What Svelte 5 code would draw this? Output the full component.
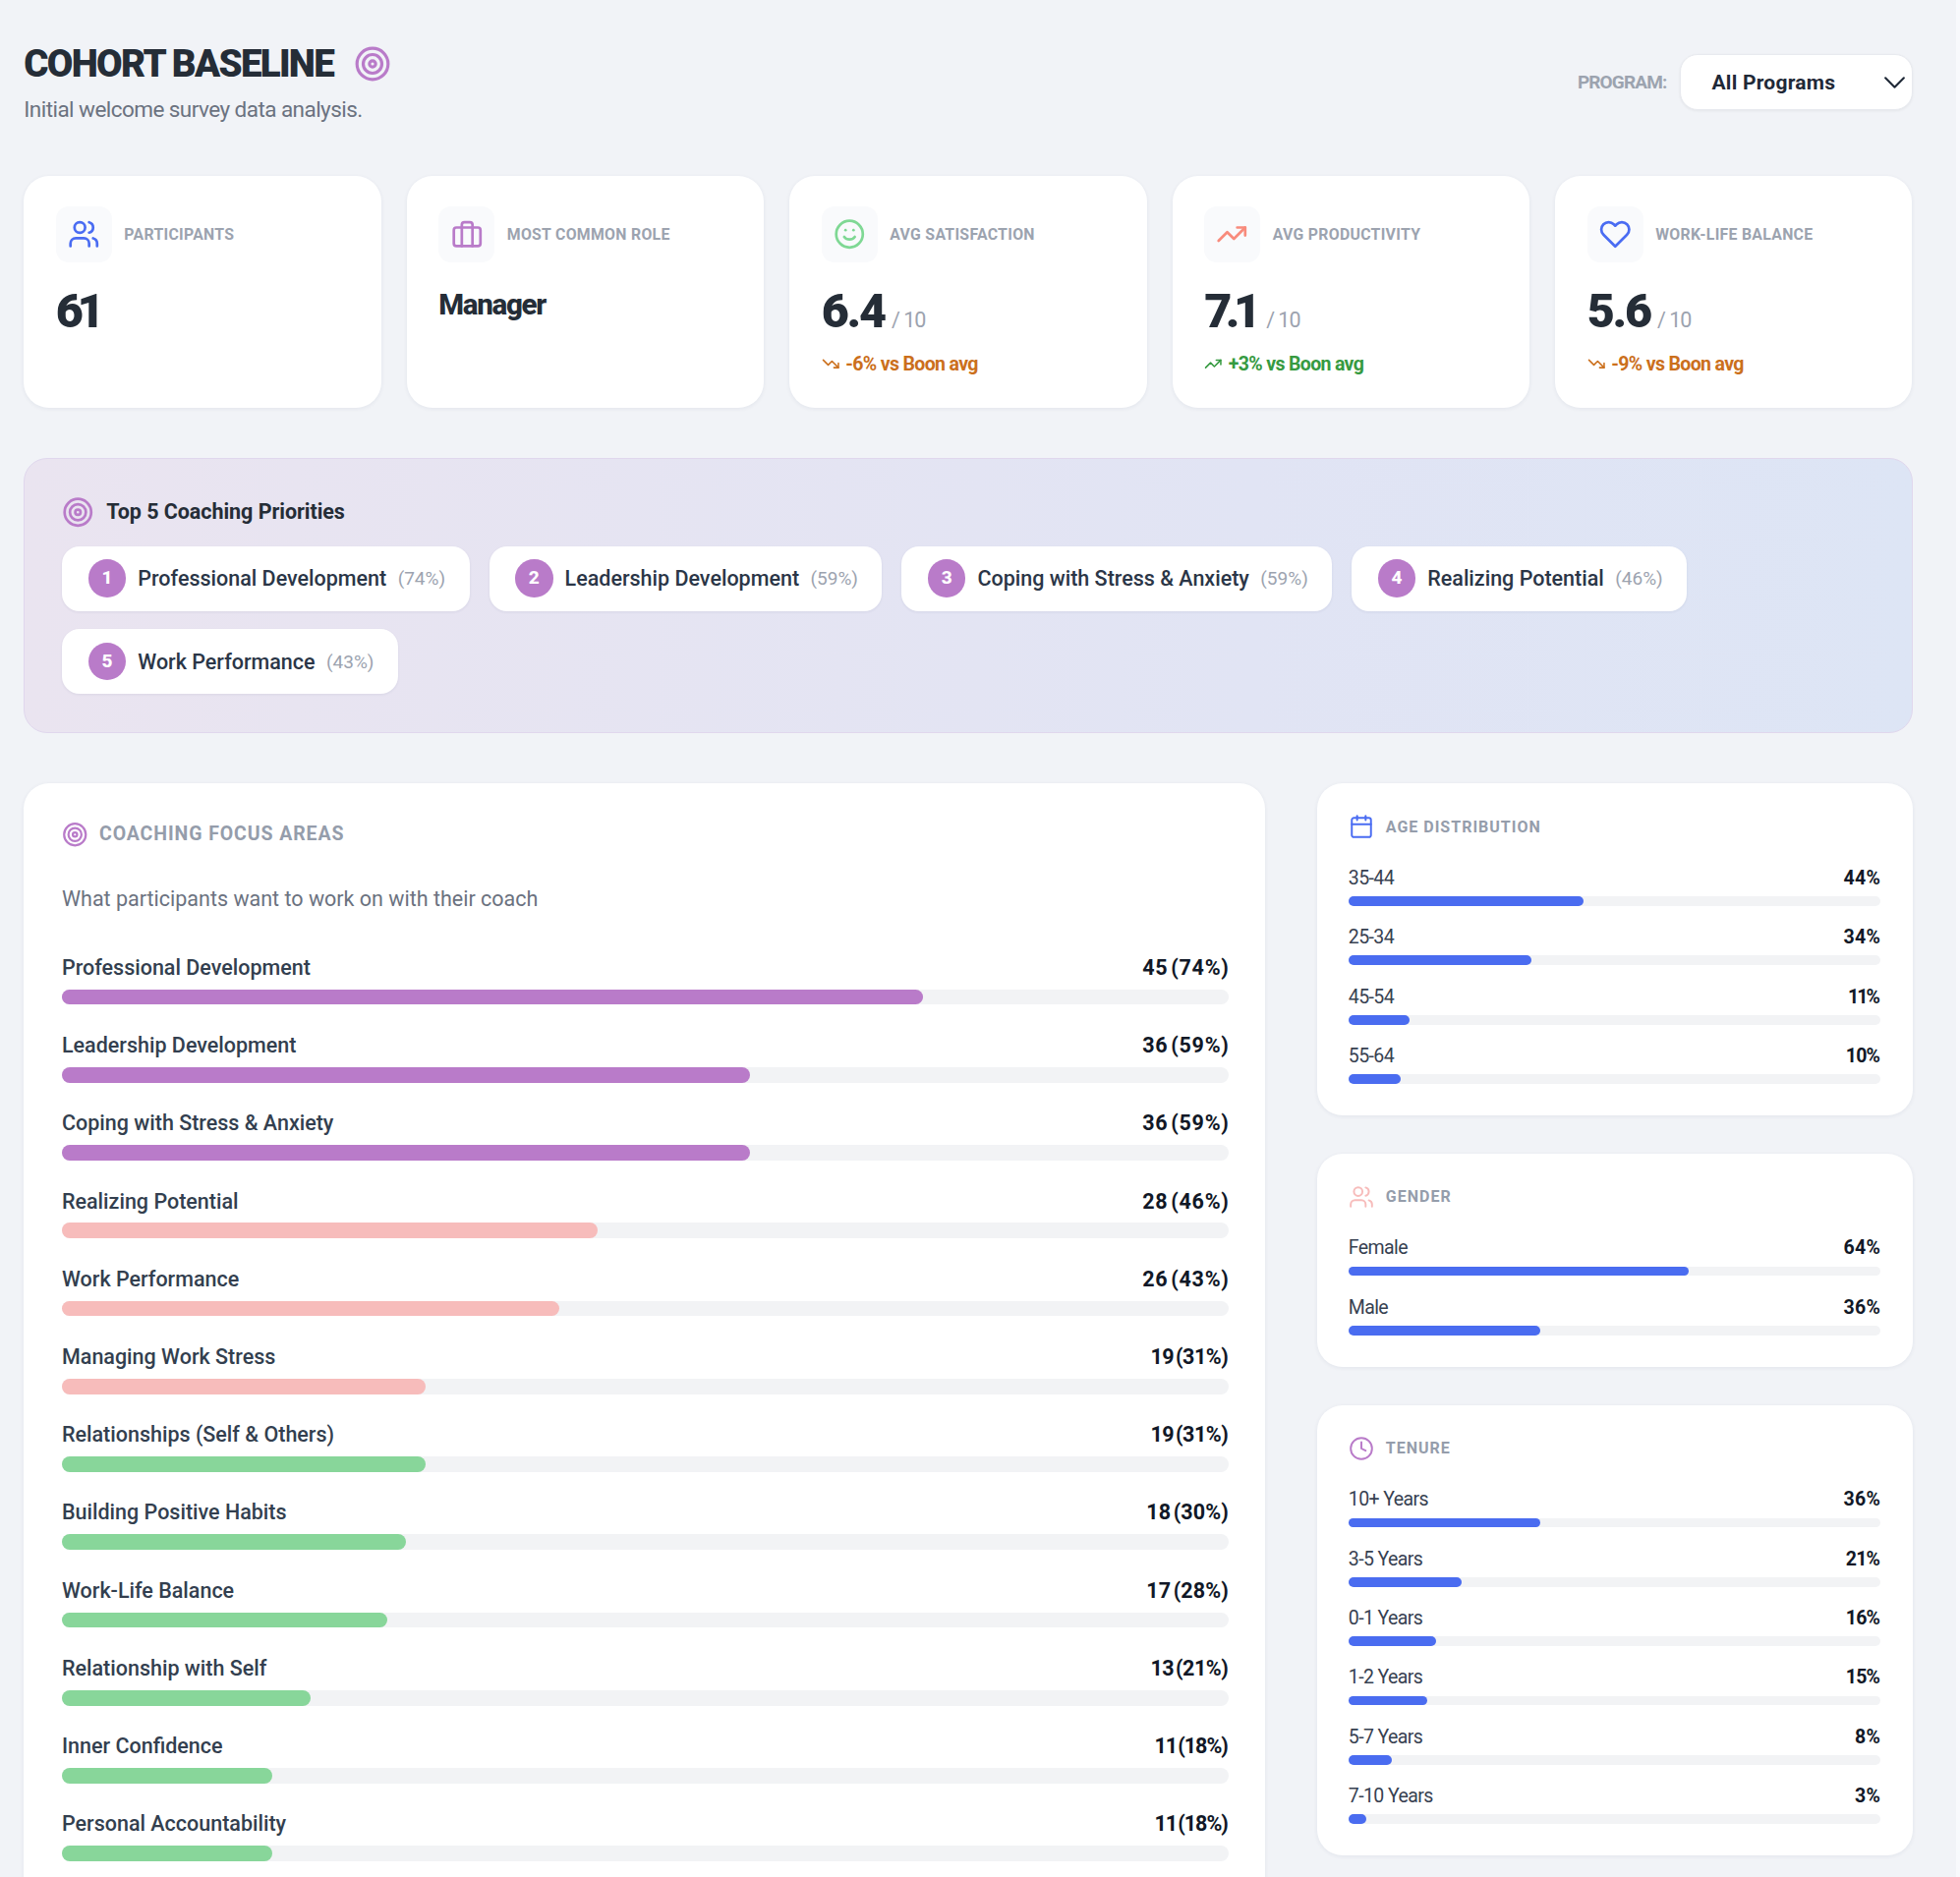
<script>
  const TOTAL = 61;

  const icons = {
    target: [
      'M2 12a10 10 0 1 0 20 0a10 10 0 1 0-20 0',
      'M6 12a6 6 0 1 0 12 0a6 6 0 1 0-12 0',
      'M10 12a2 2 0 1 0 4 0a2 2 0 1 0-4 0'
    ],
    users: [
      'M16 21v-2a4 4 0 0 0-4-4H6a4 4 0 0 0-4 4v2',
      'M5 7a4 4 0 1 0 8 0a4 4 0 1 0-8 0',
      'M22 21v-2a4 4 0 0 0-3-3.87',
      'M16 3.13a4 4 0 0 1 0 7.75'
    ],
    briefcase: [
      'M4 7h16a2 2 0 0 1 2 2v10a2 2 0 0 1-2 2H4a2 2 0 0 1-2-2V9a2 2 0 0 1 2-2z',
      'M16 21V5a2 2 0 0 0-2-2h-4a2 2 0 0 0-2 2v16'
    ],
    smile: [
      'M2 12a10 10 0 1 0 20 0a10 10 0 1 0-20 0',
      'M8 14s1.5 2 4 2 4-2 4-2',
      'M9 9h.01',
      'M15 9h.01'
    ],
    up: ['M22 7l-8.5 8.5-5-5L2 17', 'M16 7h6v6'],
    down: ['M22 17l-8.5-8.5-5 5L2 7', 'M16 17h6v-6'],
    heart: [
      'M20.84 4.61a5.5 5.5 0 0 0-7.78 0L12 5.67l-1.06-1.06a5.5 5.5 0 0 0-7.78 7.78l1.06 1.06L12 21.23l7.78-7.78 1.06-1.06a5.5 5.5 0 0 0 0-7.78z'
    ],
    calendar: [
      'M5 4h14a2 2 0 0 1 2 2v14a2 2 0 0 1-2 2H5a2 2 0 0 1-2-2V6a2 2 0 0 1 2-2z',
      'M16 2v4',
      'M8 2v4',
      'M3 10h18'
    ],
    clock: ['M2 12a10 10 0 1 0 20 0a10 10 0 1 0-20 0', 'M12 6v6l4 2'],
    chevron: ['M3 8l9 9L21 8']
  };

  const stats = [
    { label: 'Participants', icon: 'users', color: 'blue', value: '61' },
    { label: 'Most Common Role', icon: 'briefcase', color: 'purple', value: 'Manager', text: true },
    { label: 'Avg Satisfaction', icon: 'smile', color: 'green', value: '6.4', trend: 'down', diff: '-6%' },
    { label: 'Avg Productivity', icon: 'up', color: 'coral', value: '7.1', trend: 'up', diff: '+3%' },
    { label: 'Work-Life Balance', icon: 'heart', color: 'blue', value: '5.6', trend: 'down', diff: '-9%' }
  ];

  const focusAreas = [
    { name: 'Professional Development', count: 45 },
    { name: 'Leadership Development', count: 36 },
    { name: 'Coping with Stress & Anxiety', count: 36 },
    { name: 'Realizing Potential', count: 28 },
    { name: 'Work Performance', count: 26 },
    { name: 'Managing Work Stress', count: 19 },
    { name: 'Relationships (Self & Others)', count: 19 },
    { name: 'Building Positive Habits', count: 18 },
    { name: 'Work-Life Balance', count: 17 },
    { name: 'Relationship with Self', count: 13 },
    { name: 'Inner Confidence', count: 11 },
    { name: 'Personal Accountability', count: 11 }
  ];

  const breakdowns = [
    {
      title: 'Age Distribution',
      icon: 'calendar',
      color: 'blue',
      rows: [['35-44', 27], ['25-34', 21], ['45-54', 7], ['55-64', 6]]
    },
    {
      title: 'Gender',
      icon: 'users',
      color: 'pink',
      rows: [['Female', 39], ['Male', 22]]
    },
    {
      title: 'Tenure',
      icon: 'clock',
      color: 'purple',
      rows: [['10+ Years', 22], ['3-5 Years', 13], ['0-1 Years', 10], ['1-2 Years', 9], ['5-7 Years', 5], ['7-10 Years', 2]]
    }
  ];

  const share = count => (count / TOTAL) * 100;

  const percent = count => `${Math.round(share(count))}%`;

  const barColor = index => (index < 3 ? 'purple' : index < 6 ? 'pink' : 'green');

  // Roboto's 1 is as wide as any other digit, so tighten strings that contain it
  const tracking = (text, base, step) => base - step * (text.split('1').length - 1);
</script>

{#snippet icon(name, size, color = '', stroke = 2)}
  <svg class="icon {color}" width={size} height={size} viewBox="0 0 24 24" stroke-width={stroke}>
    {#each icons[name] as d}
      <path {d} />
    {/each}
  </svg>
{/snippet}

{#snippet figure(text, base, step)}
  {@const space = tracking(text, base, step)}
  <strong style="letter-spacing: {space}px; margin-right: {-space}px">{text}</strong>
{/snippet}

<div class="page">
  <header>
    <div>
      <h1>COHORT BASELINE {@render icon('target', 38, 'purple')}</h1>
      <p class="intro">Initial welcome survey data analysis.</p>
    </div>
    <div class="filter">
      <span class="filter-label">PROGRAM:</span>
      <button class="select">
        <span>All Programs</span>
        {@render icon('chevron', 25, '', 2)}
      </button>
    </div>
  </header>

  <section class="stats">
    {#each stats as stat}
      <div class="card stat">
        <div class="stat-head">
          <span class="icon-box">{@render icon(stat.icon, 32.5, stat.color)}</span>
          <span class="stat-label">{stat.label}</span>
        </div>
        <div class="value" class:text={stat.text}>
          {#if stat.text}
            {stat.value}
          {:else}
            {@render figure(stat.value, -2.3, 4.2)}
          {/if}
          {#if stat.trend}
            <span class="scale">/ 10</span>
          {/if}
        </div>
        {#if stat.trend}
          <div class="trend {stat.trend}">
            {@render icon(stat.trend, 18.5)}
            <span>{stat.diff} vs Boon avg</span>
          </div>
        {/if}
      </div>
    {/each}
  </section>

  <section class="priorities">
    <h2>{@render icon('target', 32.5, 'purple')} Top 5 Coaching Priorities</h2>
    <div class="chips">
      {#each focusAreas.slice(0, 5) as area, i}
        <div class="chip">
          <span class="rank">{i + 1}</span>
          <span class="chip-name">{area.name}</span>
          <span class="chip-share">({percent(area.count)})</span>
        </div>
      {/each}
    </div>
  </section>

  <main>
    <section class="card focus">
      <h3>{@render icon('target', 26.5, 'purple')} Coaching Focus Areas</h3>
      <p>What participants want to work on with their coach</p>
      <div class="rows">
        {#each focusAreas as area, i}
          <div>
            <div class="row-text">
              <span>{area.name}</span>
              {@render figure(`${area.count} (${percent(area.count)})`, 0.7, 0.58)}
            </div>
            <div class="track">
              <div class="fill {barColor(i)}" style="width: {share(area.count)}%"></div>
            </div>
          </div>
        {/each}
      </div>
    </section>

    <aside>
      {#each breakdowns as group}
        <section class="card side">
          <h3>{@render icon(group.icon, 26, group.color, 1.8)} {group.title}</h3>
          <div class="rows">
            {#each group.rows as [name, count]}
              <div>
                <div class="row-text">
                  <span>{name}</span>
                  {@render figure(percent(count), 0.3, 1.1)}
                </div>
                <div class="track">
                  <div class="fill blue" style="width: {share(count)}%"></div>
                </div>
              </div>
            {/each}
          </div>
        </section>
      {/each}
    </aside>
  </main>
</div>

<style>
  :global(body) {
    margin: 0;
    background: #f1f3f7;
  }

  .page {
    box-sizing: border-box;
    width: 1994px;
    height: 1910px;
    padding: 42px 44.5px 0 24.3px;
    overflow: hidden;
    border-right: 4px solid #f8f9fc;
    font-family: Roboto, "Liberation Sans", sans-serif;
    color: #252d37;
  }

  h1, h2, h3, p {
    margin: 0;
  }

  .icon {
    flex: none;
    fill: none;
    stroke: currentColor;
    stroke-linecap: round;
    stroke-linejoin: round;
  }

  .icon.purple { color: #b97bc9; }
  .icon.blue { color: #4a6cf2; }
  .icon.green { color: #7fd894; }
  .icon.coral { color: #f88b7c; }
  .icon.pink { color: #f7bcbb; }

  header {
    display: flex;
    align-items: center;
    justify-content: space-between;
    height: 83px;
  }

  h1 {
    display: flex;
    align-items: center;
    gap: 20.5px;
    height: 45px;
    font-size: 38.5px;
    font-weight: 900;
    letter-spacing: -1.7px;
    line-height: 46px;
  }

  .intro {
    margin-top: 10px;
    font-size: 22.5px;
    letter-spacing: -0.55px;
    line-height: 28px;
    color: #6b7280;
  }

  .filter {
    display: flex;
    align-items: center;
    gap: 13px;
    margin-bottom: 1px;
  }

  .filter-label {
    font-size: 19px;
    font-weight: 700;
    letter-spacing: -0.85px;
    color: #9ca3af;
  }

  .select {
    box-sizing: border-box;
    display: flex;
    align-items: center;
    justify-content: space-between;
    width: 237px;
    height: 57px;
    padding: 1px 5px 0 32px;
    border: 1px solid #e8eaef;
    border-radius: 18px;
    background: #fff;
    box-shadow: 0 1px 3px rgba(0, 0, 0, 0.06);
    font: 700 21px Roboto, "Liberation Sans", sans-serif;
    letter-spacing: 0.25px;
    color: #1f2937;
  }

  .card {
    box-sizing: border-box;
    border-radius: 26px;
    background: #fff;
    box-shadow: 0 1px 4px rgba(30, 40, 80, 0.07);
  }

  .stats {
    display: grid;
    grid-template-columns: repeat(5, 1fr);
    gap: 26.2px;
    margin-top: 53.5px;
  }

  .stat {
    height: 236px;
    padding: 31.5px 32.5px;
  }

  .stat-head {
    display: flex;
    align-items: center;
    gap: 12.5px;
  }

  .icon-box {
    display: flex;
    align-items: center;
    justify-content: center;
    width: 57px;
    height: 57px;
    border-radius: 13px;
    background: #f9fafc;
  }

  .stat-label {
    margin-bottom: 1px;
    font-size: 15.8px;
    font-weight: 700;
    letter-spacing: 0.3px;
    text-transform: uppercase;
    color: #9ca3af;
  }

  .value {
    display: flex;
    align-items: baseline;
    margin-top: 26px;
    font-size: 48.5px;
    font-weight: 900;
    line-height: 48px;
  }

  .value.text {
    font-size: 29.5px;
    font-weight: 800;
    letter-spacing: -1.3px;
    line-height: 34px;
  }

  .scale {
    margin-left: 5px;
    font-size: 21.5px;
    font-weight: 400;
    letter-spacing: -1px;
    line-height: 24px;
    color: #9ca3af;
  }

  .trend {
    display: flex;
    align-items: center;
    gap: 6px;
    margin-top: 15.5px;
    font-size: 19.5px;
    font-weight: 700;
    letter-spacing: -0.65px;
    line-height: 28px;
  }

  .trend.down { color: #cb6f1c; }
  .trend.up { color: #369a41; }

  .priorities {
    box-sizing: border-box;
    height: 280px;
    margin-top: 51px;
    padding: 38px;
    border: 1px solid #e0d7ed;
    border-radius: 24px;
    background: linear-gradient(90deg, #eae4f0, #e1e4f4 65%, #dde5f5);
  }

  h2 {
    display: flex;
    align-items: center;
    gap: 12.5px;
    height: 32.5px;
    font-size: 21.5px;
    font-weight: 700;
    letter-spacing: -0.05px;
  }

  .chips {
    display: flex;
    flex-wrap: wrap;
    gap: 18.5px 20px;
    margin-top: 18.5px;
  }

  .chip {
    display: flex;
    align-items: center;
    height: 66px;
    padding: 0 24.5px 0 26.5px;
    border-radius: 18px;
    background: #fff;
    box-shadow: 0 1px 3px rgba(30, 40, 80, 0.07);
  }

  .rank {
    width: 38.5px;
    border-radius: 50%;
    background: #b97bc9;
    font-size: 19px;
    font-weight: 800;
    line-height: 38.5px;
    text-align: center;
    color: #fff;
  }

  .chip-name {
    margin: 0 11.5px 0 12px;
    font-size: 21.5px;
    font-weight: 500;
    color: #2b3647;
  }

  .chip-share {
    font-size: 19px;
    color: #9ca3af;
  }

  main {
    display: grid;
    grid-template-columns: 1263px 1fr;
    align-items: start;
    gap: 53px;
    margin-top: 51.8px;
  }

  h3 {
    display: flex;
    align-items: center;
    text-transform: uppercase;
    color: #959dab;
  }

  .rows {
    display: flex;
    flex-direction: column;
  }

  .row-text {
    display: flex;
    justify-content: space-between;
  }

  .row-text strong {
    font-weight: 700;
    word-spacing: -3px;
    color: #111827;
  }

  .track {
    border-radius: 99px;
    background: #f2f3f5;
  }

  .fill {
    height: 100%;
    border-radius: 99px;
  }

  .fill.purple { background: #b97bc9; }
  .fill.pink { background: #f7bcbb; }
  .fill.green { background: #88d69a; }
  .fill.blue { background: #4a6cf0; }

  .focus {
    padding: 38px 37.5px 60px 38.7px;
  }

  .focus h3 {
    gap: 11.5px;
    height: 27px;
    font-size: 19.5px;
    letter-spacing: 0.9px;
  }

  .focus p {
    margin: 38px 0 39.5px;
    font-size: 21.5px;
    line-height: 30px;
    color: #6b7280;
  }

  .focus .rows {
    gap: 26.56px;
  }

  .focus .row-text {
    font-size: 21.5px;
    font-weight: 500;
    line-height: 30px;
    color: #333f4f;
  }

  .focus .track {
    height: 15.8px;
    margin-top: 6.9px;
  }

  aside {
    display: flex;
    flex-direction: column;
    gap: 39px;
  }

  .side {
    padding: 31px 32.5px 32px 31.5px;
  }

  .side h3 {
    gap: 12px;
    height: 26px;
    font-size: 16px;
    letter-spacing: 1px;
  }

  .side .rows {
    gap: 20.4px;
    margin-top: 27.5px;
  }

  .side .row-text {
    font-size: 19.5px;
    letter-spacing: -0.6px;
    line-height: 24px;
    color: #374151;
  }

  .side .track {
    height: 9.7px;
    margin-top: 6.3px;
  }
</style>
